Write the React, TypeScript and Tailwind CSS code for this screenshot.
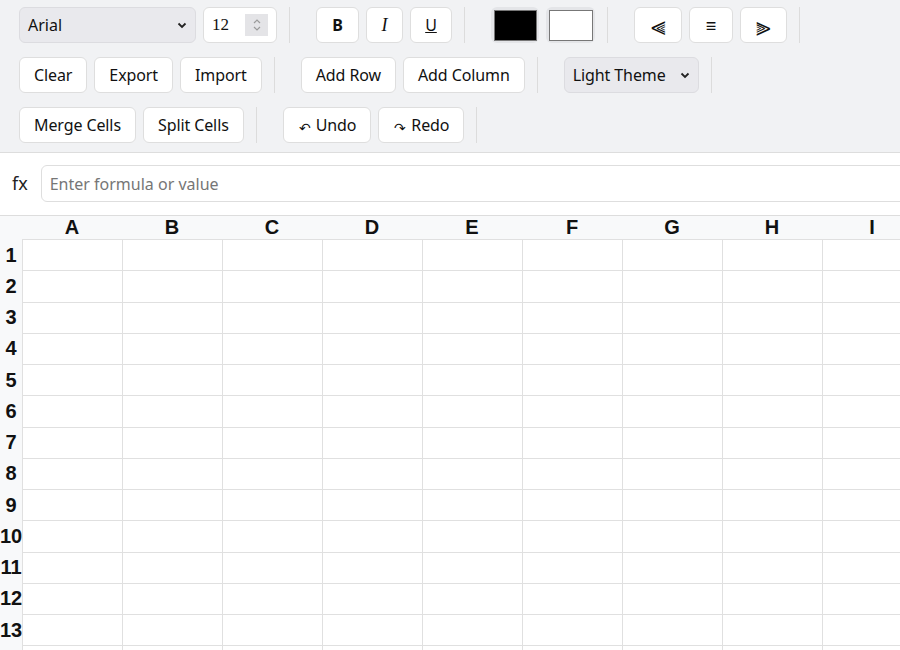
import React from "react";

const COLS = ["A", "B", "C", "D", "E", "F", "G", "H", "I", "J"];
const ROWS = Array.from({ length: 16 }, (_, i) => i + 1);

function Btn({ children, className = "" }: { children: React.ReactNode; className?: string }) {
  return (
    <button
      className={`flex h-9 items-center justify-center rounded-md border border-[#dedede] bg-white px-[14px] text-[16px] tracking-[-0.1px] text-[#111] ${className}`}
    >
      {children}
    </button>
  );
}

function Group({ children }: { children: React.ReactNode }) {
  return <div className="flex gap-[7px] border-r border-[#dcdcdc] px-3">{children}</div>;
}

function Chevron() {
  return (
    <svg width="14" height="14" viewBox="0 0 14 14" fill="none" stroke="#222" strokeWidth="1.8">
      <path d="M3.5 5.5 7 9 10.5 5.5" />
    </svg>
  );
}

function Toolbar() {
  return (
    <div className="flex flex-wrap gap-x-[14px] gap-y-[14px] border-b border-[#dddddd] bg-[#f1f2f4] px-[7px] pt-[7px] pb-[9px]">
      <Group>
        <div className="flex h-9 w-[177px] items-center justify-between rounded-md border border-[#dcdce0] bg-[#e9e9ed] pl-2 pr-[6px] text-[16px] text-[#111]">
          <span>Arial</span>
          <Chevron />
        </div>
        <div className="flex h-9 w-[74px] items-center justify-between rounded-md border border-[#dedede] bg-white pl-2 pr-2">
          <span className="font-['Liberation_Serif',serif] text-[17px] text-[#111]">12</span>
          <div className="flex h-[22px] w-[23px] flex-col items-center justify-center bg-[#e4e4e7]">
            <svg width="10" height="14" viewBox="0 0 10 14" fill="none" stroke="#9a9a9a" strokeWidth="1.2">
              <path d="M2 5 5 2 8 5" />
              <path d="M2 9 5 12 8 9" />
            </svg>
          </div>
        </div>
      </Group>
      <Group>
        <Btn className="w-[43px] px-0 font-bold">B</Btn>
        <Btn className="w-[37px] px-0 font-['Liberation_Serif',serif] text-[18px] italic">I</Btn>
        <Btn className="w-[42px] px-0 underline">U</Btn>
      </Group>
      <Group>
        <div className="flex h-9 w-[48px] items-center justify-center rounded-md bg-[#e4e5e8]">
          <div className="h-[31px] w-[43px] border border-[#777] bg-black" />
        </div>
        <div className="flex h-9 w-[49px] items-center justify-center rounded-md bg-[#e4e5e8]">
          <div className="h-[31px] w-[44px] border border-[#777] bg-white" />
        </div>
      </Group>
      <Group>
        <Btn className="w-[48px] px-0 text-[26px] leading-none">⫷</Btn>
        <Btn className="w-[44px] px-0 text-[18px]">≡</Btn>
        <Btn className="w-[47px] px-0 text-[26px] leading-none">⫸</Btn>
      </Group>
      <Group>
        <Btn>Clear</Btn>
        <Btn>Export</Btn>
        <Btn>Import</Btn>
      </Group>
      <Group>
        <Btn>Add Row</Btn>
        <Btn>Add Column</Btn>
      </Group>
      <Group>
        <div className="flex h-9 w-[135px] items-center justify-between rounded-md border border-[#dcdce0] bg-[#e9e9ed] pl-2 pr-[6px] text-[16px] tracking-[-0.1px] text-[#111]">
          <span>Light Theme</span>
          <Chevron />
        </div>
      </Group>
      <Group>
        <Btn>Merge Cells</Btn>
        <Btn>Split Cells</Btn>
      </Group>
      <Group>
        <Btn>
          <span className="ml-[1px] mr-[5px] mt-[4px] text-[14px]">↶</span>Undo
        </Btn>
        <Btn>
          <span className="ml-[1px] mr-[5px] mt-[4px] text-[14px]">↷</span>Redo
        </Btn>
      </Group>
    </div>
  );
}

function FormulaBar() {
  return (
    <div className="flex items-center gap-[13px] border-b border-[#dddddd] bg-white pt-3 pb-[13px] pl-3">
      <span className="text-[18px] text-[#222]">fx</span>
      <input
        className="h-[37px] min-w-0 flex-1 -mr-10 rounded-md border border-[#dedede] px-2 text-[16px] outline-none placeholder:text-[#767676]"
        placeholder="Enter formula or value"
      />
    </div>
  );
}

function Grid() {
  return (
    <div className="font-['Liberation_Sans',Arial,sans-serif]">
      <div className="flex h-[23px] bg-[#f8f9fa]">
        <div className="w-[22px] shrink-0" />
        {COLS.map((c) => (
          <div key={c} className="w-[100px] shrink-0 text-center text-[20px] leading-[23px] font-bold text-[#111]">
            {c}
          </div>
        ))}
      </div>
      {ROWS.map((r) => (
        <div key={r} className="flex h-[31.25px]">
          <div className="flex w-[22px] shrink-0 items-center justify-center bg-[#f8f9fa] text-[20px] font-bold text-[#111]">
            {r}
          </div>
          {COLS.map((c) => (
            <div key={c} className="w-[100px] shrink-0 border-l border-t border-[#e0e0e0] bg-white" />
          ))}
        </div>
      ))}
    </div>
  );
}

export default function App() {
  return (
    <div className="h-[650px] w-full overflow-hidden bg-white font-['Noto_Sans',sans-serif]">
      <Toolbar />
      <FormulaBar />
      <Grid />
    </div>
  );
}
